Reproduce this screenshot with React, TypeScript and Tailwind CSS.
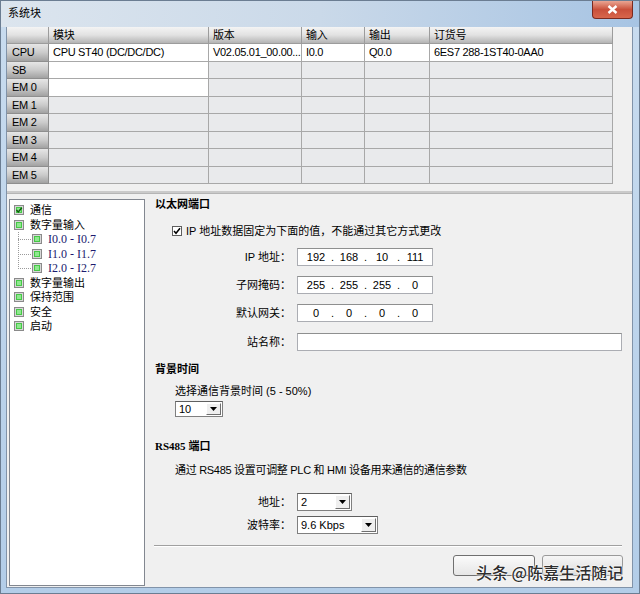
import React from "react";

const colWidths = ["w-[42px]", "w-[160px]", "w-[93px]", "w-[63px]", "w-[65px]", "w-[183px]"];
const headers = ["", "模块", "版本", "输入", "输出", "订货号"];

type Row = { name: string; cells: string[]; white: number };
const rows: Row[] = [
    { name: "CPU", cells: ["CPU ST40 (DC/DC/DC)", "V02.05.01_00.00...", "I0.0", "Q0.0", "6ES7 288-1ST40-0AA0"], white: 5 },
    { name: "SB", cells: ["", "", "", "", ""], white: 1 },
    { name: "EM 0", cells: ["", "", "", "", ""], white: 1 },
    { name: "EM 1", cells: ["", "", "", "", ""], white: 0 },
    { name: "EM 2", cells: ["", "", "", "", ""], white: 0 },
    { name: "EM 3", cells: ["", "", "", "", ""], white: 0 },
    { name: "EM 4", cells: ["", "", "", "", ""], white: 0 },
    { name: "EM 5", cells: ["", "", "", "", ""], white: 0 },
];

const TreeBox: React.FC<{ checked?: boolean }> = ({ checked }) => (
    <svg width="10" height="10" viewBox="0 0 10 10" className="shrink-0">
        <rect x="0.5" y="0.5" width="9" height="9" fill="#d8d8d8" stroke="#8a8a8a" />
        <rect x="2" y="2" width="6" height="6" fill="#46c846" />
        <rect x="3" y="3" width="4" height="4" fill="#8fe88f" />
        {checked && <path d="M2.5 5 L4.3 7 L7.8 2.8" fill="none" stroke="#0d5a0d" strokeWidth="1.4" />}
    </svg>
);

const IpBox: React.FC<{ parts: string[] }> = ({ parts }) => (
    <div className="w-[136px] h-[18px] bg-white border border-[#abadb3] border-t-[#8e8f8f] flex items-center pl-[5px] overflow-hidden">
        {parts.map((p, i) => (
            <React.Fragment key={i}>
                <span className="w-[26px] text-center">{p}</span>
                {i < 3 && <span className="w-[7px] text-center">.</span>}
            </React.Fragment>
        ))}
    </div>
);

const Arrow: React.FC = () => (
    <div className="w-[15px] m-[1px] bg-[#efefef] border border-t-white border-l-white border-b-[#6f6f6f] border-r-[#6f6f6f] flex items-center justify-center">
        <svg width="7" height="4" viewBox="0 0 7 4">
            <path d="M0 0 H7 L3.5 4 Z" fill="#000" />
        </svg>
    </div>
);

const Combo: React.FC<{ value: string; className: string }> = ({ value, className }) => (
    <div className={`bg-white border border-[#7f7f7f] border-t-[#5f5f5f] flex ${className}`}>
        <div className="flex-1 flex items-center pl-[3px]">{value}</div>
        <Arrow />
    </div>
);

const FieldRow: React.FC<{ label: string; className: string; children: React.ReactNode }> = ({ label, className, children }) => (
    <div className={`flex items-center ${className}`}>
        <div className="w-[146px] text-right">{label}</div>
        <div className="ml-[6px]">{children}</div>
    </div>
);

const App: React.FC = () => {
    return (
        <div className="relative w-[640px] h-[594px] overflow-hidden bg-gradient-to-b from-[#c9dcef] to-[#b3cde8] border border-[#6b7d92] flex flex-col font-['Liberation_Sans','Noto_Sans_CJK_SC',sans-serif] text-[11px] leading-[16px] text-black">
            {/* title bar */}
            <div className="h-[26px] shrink-0 bg-gradient-to-r from-[#dce5ee] via-[#cad9e9] to-[#a7c4e3] pl-[7px] pt-[4px]">系统块</div>

            {/* close button */}
            <div className="absolute top-0 left-[591px] w-[41px] h-[18px] rounded-b-[4px] border border-t-0 border-[#7a2a20] bg-gradient-to-b from-[#e9a593] via-[#c9503b] to-[#d8664c] flex items-center justify-center">
                <svg width="11" height="9" viewBox="0 0 11 9">
                    <path d="M1.5 1 L9.5 8 M9.5 1 L1.5 8" stroke="#fff" strokeWidth="2.4" />
                </svg>
            </div>

            {/* client area */}
            <div className="flex-1 ml-[5px] mr-[6px] mb-[5px] bg-[#f0f0f0] border border-t-0 border-[#8193a9] flex flex-col">
                {/* module table */}
                <div className="flex tracking-[-0.3px]">
                    <div className="flex flex-col">
                        <div className="flex h-[17px]">
                            {headers.map((h, i) => (
                                <div key={i} className={`${colWidths[i]} h-full bg-gradient-to-b from-[#f4f4f4] via-[#e2e2e2] to-[#b4b4b4] border-r border-b border-[#9c9c9c] pl-[4px] flex items-center`}>
                                    {h}
                                </div>
                            ))}
                        </div>
                        {rows.map((r) => (
                            <div key={r.name} className="flex h-[17.5px]">
                                <div className={`${colWidths[0]} h-full bg-gradient-to-b from-[#e6e6e6] via-[#cbcbcb] to-[#a2a2a2] border-r border-b border-[#8e8e8e] pl-[5px] flex items-center`}>
                                    {r.name}
                                </div>
                                {r.cells.map((c, i) => (
                                    <div key={i} className={`${colWidths[i + 1]} h-full border-r border-b border-[#a8a8a8] pl-[4px] flex items-center whitespace-nowrap overflow-hidden ${i < r.white ? "bg-white" : "bg-[#e9eaec]"}`}>
                                        {c}
                                    </div>
                                ))}
                            </div>
                        ))}
                    </div>
                </div>

                {/* splitter */}
                <div className="mt-[7px] h-[3px] bg-[#cacaca] border-b border-[#b5b5b5]" />

                {/* lower part */}
                <div className="flex-1 flex">
                    {/* tree */}
                    <div className="pl-[2px] pt-[5px] pb-[1px] flex">
                        <div className="relative w-[136px] bg-white border border-[#828790] pt-[3px] pl-[4px]">
                            {/* dotted connectors */}
                            <div className="absolute left-[8px] top-[32px] h-[37px] border-l border-dotted border-[#9a9a9a]" />
                            <div className="absolute left-[8px] top-[39px] w-[13px] border-t border-dotted border-[#9a9a9a]" />
                            <div className="absolute left-[8px] top-[54px] w-[13px] border-t border-dotted border-[#9a9a9a]" />
                            <div className="absolute left-[8px] top-[68px] w-[13px] border-t border-dotted border-[#9a9a9a]" />

                            <div className="h-[14.5px] flex items-center gap-[6px]"><TreeBox checked />通信</div>
                            <div className="h-[14.5px] flex items-center gap-[6px]"><TreeBox />数字量输入</div>
                            {["I0.0 - I0.7", "I1.0 - I1.7", "I2.0 - I2.7"].map((t) => (
                                <div key={t} className="h-[14.5px] flex items-center gap-[6px] pl-[18px] font-['Liberation_Serif',serif] text-[12px] text-[#1b1b6e]">
                                    <TreeBox />
                                    {t}
                                </div>
                            ))}
                            <div className="h-[14.5px] flex items-center gap-[6px]"><TreeBox />数字量输出</div>
                            <div className="h-[14.5px] flex items-center gap-[6px]"><TreeBox />保持范围</div>
                            <div className="h-[14.5px] flex items-center gap-[6px]"><TreeBox />安全</div>
                            <div className="h-[14.5px] flex items-center gap-[6px]"><TreeBox />启动</div>
                        </div>
                    </div>

                    {/* settings panel */}
                    <div className="flex-1 flex flex-col">
                        <div className="mt-[2px] h-[16px] pl-[10px] font-bold">以太网端口</div>

                        <div className="mt-[11px] h-[16px] pl-[27px] flex items-center">
                            <div className="w-[10px] h-[10px] bg-white border border-[#5e5e5e] flex items-center justify-center">
                                <svg width="8" height="8" viewBox="0 0 8 8">
                                    <path d="M1 4 L3 6.3 L7 1.2" fill="none" stroke="#000" strokeWidth="1.5" />
                                </svg>
                            </div>
                            <span className="ml-[4px]">IP 地址数据固定为下面的值，不能通过其它方式更改</span>
                        </div>

                        <FieldRow label="IP 地址：" className="mt-[9px] h-[18px]">
                            <IpBox parts={["192", "168", "10", "111"]} />
                        </FieldRow>
                        <FieldRow label="子网掩码：" className="mt-[10px] h-[18px]">
                            <IpBox parts={["255", "255", "255", "0"]} />
                        </FieldRow>
                        <FieldRow label="默认网关：" className="mt-[10px] h-[18px]">
                            <IpBox parts={["0", "0", "0", "0"]} />
                        </FieldRow>
                        <FieldRow label="站名称：" className="mt-[11px] h-[18px]">
                            <div className="w-[325px] h-[18px] bg-white border border-[#abadb3] border-t-[#8e8f8f]" />
                        </FieldRow>

                        <div className="mt-[10px] h-[16px] pl-[10px] font-bold">背景时间</div>
                        <div className="mt-[6px] h-[16px] pl-[30px]">选择通信背景时间 (5 - 50%)</div>
                        <div className="mt-[2px] pl-[30px]">
                            <Combo value="10" className="w-[48px] h-[16px]" />
                        </div>

                        <div className="mt-[21px] h-[16px] pl-[10px] font-bold">
                            <span className="font-['Liberation_Serif',serif]">RS485</span> 端口
                        </div>
                        <div className="mt-[8px] h-[16px] pl-[30px] tracking-[-0.3px]">通过 RS485 设置可调整 PLC 和 HMI 设备用来通信的通信参数</div>

                        <FieldRow label="地址：" className="mt-[15px] h-[18px]">
                            <Combo value="2" className="w-[55px] h-[18px]" />
                        </FieldRow>
                        <FieldRow label="波特率：" className="mt-[5px] h-[18px]">
                            <Combo value="9.6 Kbps" className="w-[81px] h-[18px]" />
                        </FieldRow>

                        <div className="mt-[11px] ml-[9px] mr-[10px] border-t border-[#a0a0a0] border-b border-b-white" />

                        <div className="mt-[8px] flex justify-end gap-[7px] pr-[9px]">
                            <div className="w-[82px] h-[21px] rounded-[3px] border border-[#707070] bg-gradient-to-b from-[#fbfbfb] to-[#e6e6e6]" />
                            <div className="w-[81px] h-[21px] rounded-[3px] border border-[#9a9a9a] bg-gradient-to-b from-[#f6f6f6] to-[#dddddd]" />
                        </div>
                    </div>
                </div>
            </div>

            {/* watermark */}
            <div className="absolute left-[475px] top-[561px] text-[16px] leading-[20px] font-medium text-[#2e2e2e] font-['Noto_Sans_CJK_SC',sans-serif] [text-shadow:0_0_2px_#fff,0_0_2px_#fff,0_0_1px_#fff]">
                头条 @陈嘉生活随记
            </div>
        </div>
    );
};

export default App;
